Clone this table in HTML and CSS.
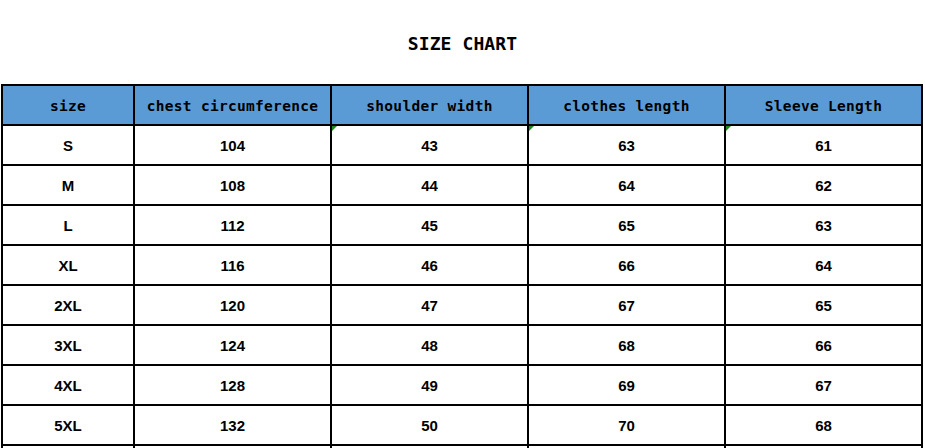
FILE: index.html
```html
<!DOCTYPE html>
<html lang="en">
<head>
<meta charset="utf-8">
<title>Size Chart</title>
<link rel="stylesheet" href="styles.css">
</head>
<body>
<div class="page">
  <h1 class="title">SIZE CHART</h1>
  <div class="chart">
    <div class="cell head">size</div>
    <div class="cell head">chest circumference</div>
    <div class="cell head">shoulder width</div>
    <div class="cell head">clothes length</div>
    <div class="cell head">Sleeve Length</div>

    <div class="cell">S</div><div class="cell">104</div><div class="cell flag">43</div><div class="cell flag">63</div><div class="cell flag">61</div>
    <div class="cell">M</div><div class="cell">108</div><div class="cell">44</div><div class="cell">64</div><div class="cell">62</div>
    <div class="cell">L</div><div class="cell">112</div><div class="cell">45</div><div class="cell">65</div><div class="cell">63</div>
    <div class="cell">XL</div><div class="cell">116</div><div class="cell">46</div><div class="cell">66</div><div class="cell">64</div>
    <div class="cell">2XL</div><div class="cell">120</div><div class="cell">47</div><div class="cell">67</div><div class="cell">65</div>
    <div class="cell">3XL</div><div class="cell">124</div><div class="cell">48</div><div class="cell">68</div><div class="cell">66</div>
    <div class="cell">4XL</div><div class="cell">128</div><div class="cell">49</div><div class="cell">69</div><div class="cell">67</div>
    <div class="cell">5XL</div><div class="cell">132</div><div class="cell">50</div><div class="cell">70</div><div class="cell">68</div>
    <div class="cell"></div><div class="cell"></div><div class="cell"></div><div class="cell"></div><div class="cell"></div>
  </div>
</div>
</body>
</html>
```
FILE: styles.css
```css
html, body {
  margin: 0;
  padding: 0;
  background: #ffffff;
  overflow: hidden;
}
.page {
  width: 925px;
  height: 448px;
  overflow: hidden;
}
.title {
  margin: 0;
  height: 84px;
  display: flex;
  align-items: center;
  justify-content: center;
  padding-top: 4px;
  box-sizing: border-box;
  font-family: "DejaVu Sans Mono", monospace;
  font-weight: bold;
  font-size: 18px;
  letter-spacing: 0.1px;
  color: #000;
  line-height: 1;
}
.chart {
  margin-left: 1px;
  width: 922px;
  box-sizing: border-box;
  display: grid;
  grid-template-columns: 132px 197px 197px 197px 197px;
  grid-auto-rows: 40px;
  border-left: 2px solid #000;
  border-top: 2px solid #000;
}
.cell {
  position: relative;
  box-sizing: border-box;
  border-right: 2px solid #000;
  border-bottom: 2px solid #000;
  display: flex;
  align-items: center;
  justify-content: center;
  font-family: "Liberation Sans", Arial, sans-serif;
  font-weight: bold;
  font-size: 15px;
  color: #000;
}
.head {
  background: #5b9bd5;
  font-family: "DejaVu Sans Mono", monospace;
  font-size: 14.5px;
  letter-spacing: 0.3px;
  padding-top: 2px;
}
.flag::before {
  content: "";
  position: absolute;
  left: 0;
  top: 0;
  width: 0;
  height: 0;
  border-top: 5px solid #1e8a1e;
  border-right: 5px solid transparent;
}
```
